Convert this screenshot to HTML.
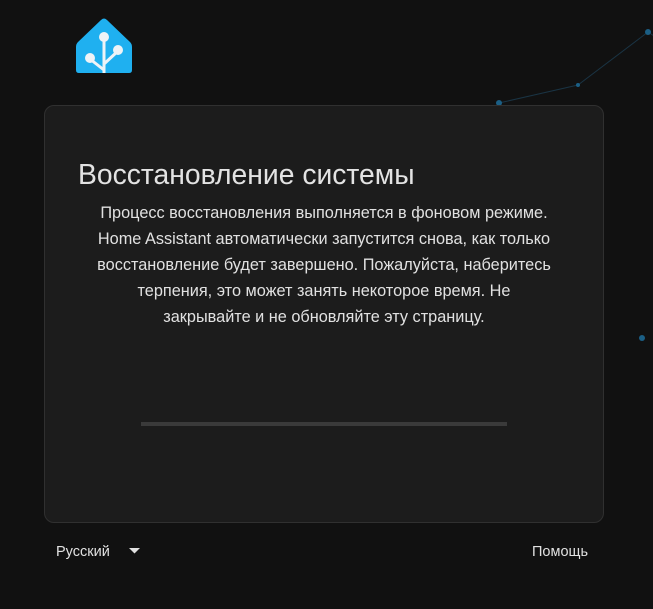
<!DOCTYPE html>
<html><head><meta charset="utf-8"><style>
body{margin:0;width:653px;height:609px;background:#111111;font-family:"Liberation Sans",sans-serif;position:relative;overflow:hidden}
.card{position:absolute;left:44px;top:105px;width:558px;height:416px;background:#1c1c1c;border:1px solid #303030;border-radius:10px}
h1{position:absolute;left:33px;top:52px;margin:0;font-weight:400;font-size:28.3px;color:#e3e3e3;white-space:nowrap}
p{position:absolute;left:0;right:0;top:94px;margin:0;text-align:center;font-size:16.3px;line-height:26px;color:#e1e1e1;white-space:nowrap}
.bar{position:absolute;left:96px;top:316px;width:366px;height:4px;background:#3a3a3a}
.f{position:absolute;top:544px;font-size:14.5px;color:#e1e1e1}
</style></head><body>
<svg width="653" height="609" style="position:absolute;left:0;top:0">
<g stroke="#1a3444" stroke-width="1"><line x1="499" y1="103" x2="578" y2="85"/><line x1="578" y1="85" x2="648" y2="32"/><line x1="648" y1="32" x2="660" y2="40"/></g>
<g fill="#1b5f85"><circle cx="499" cy="103" r="3"/><circle cx="578" cy="85" r="2"/><circle cx="648" cy="32" r="3"/><circle cx="642" cy="338" r="3"/></g>
<path d="M101 20 Q104 17 107 20 L130 42 Q132 44 132 47 L132 70 Q132 73 129 73 L79 73 Q76 73 76 70 L76 47 Q76 44 78 42 Z" fill="#1fb0f0"/>
<g stroke="#eef3f7" stroke-width="3" fill="none"><line x1="104" y1="36" x2="104" y2="73"/><line x1="104" y1="70" x2="90" y2="59"/><line x1="104" y1="64" x2="118" y2="51"/></g>
<g fill="#eef3f7"><circle cx="104" cy="37" r="5"/><circle cx="90" cy="58" r="5"/><circle cx="118" cy="50" r="5"/></g>
</svg>
<div class="card"><h1>Восстановление системы</h1>
<p>Процесс восстановления выполняется в фоновом режиме.<br>Home Assistant автоматически запустится снова, как только<br>восстановление будет завершено. Пожалуйста, наберитесь<br>терпения, это может занять некоторое время. Не<br>закрывайте и не обновляйте эту страницу.</p>
<div class="bar"></div></div>
<div class="f" style="left:56px">Русский</div>
<svg style="position:absolute;left:129px;top:548px" width="12" height="6"><path d="M0 0 L11 0 L5.5 5.5Z" fill="#e1e1e1"/></svg>
<div class="f" style="left:532px">Помощь</div>
</body></html>
